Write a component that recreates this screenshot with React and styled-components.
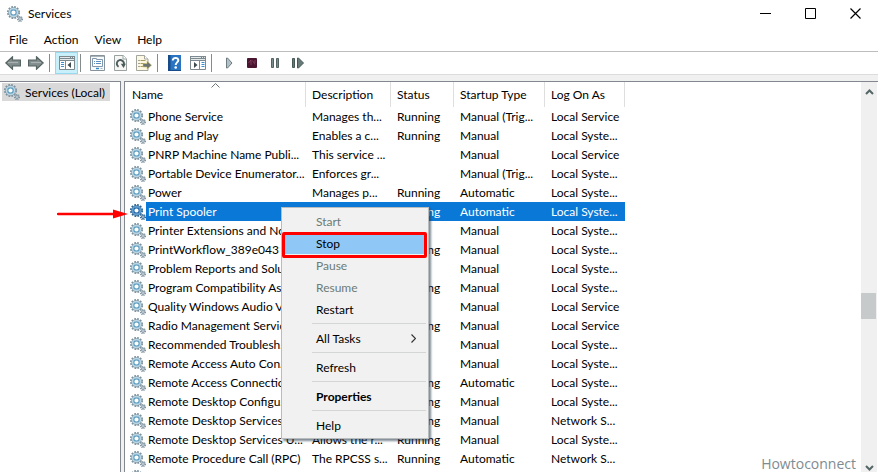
import React, { useState } from 'react';
import styled, { createGlobalStyle } from 'styled-components';

const services = [
    ['Phone Service', 'Manages th...', 'Running', 'Manual (Trig...', 'Local Service'],
    ['Plug and Play', 'Enables a c...', 'Running', 'Manual', 'Local Syste...'],
    ['PNRP Machine Name Publi...', 'This service ...', '', 'Manual', 'Local Service'],
    ['Portable Device Enumerator...', 'Enforces gr...', '', 'Manual (Trig...', 'Local Syste...'],
    ['Power', 'Manages p...', 'Running', 'Automatic', 'Local Syste...'],
    ['Print Spooler', '', 'Running', 'Automatic', 'Local Syste...'],
    ['Printer Extensions and Not...', '', '', 'Manual', 'Local Syste...'],
    ['PrintWorkflow_389e043', '', 'Running', 'Manual', 'Local Syste...'],
    ['Problem Reports and Solu...', '', '', 'Manual', 'Local Syste...'],
    ['Program Compatibility Ass...', '', 'Running', 'Manual', 'Local Syste...'],
    ['Quality Windows Audio Vi...', '', '', 'Manual', 'Local Service'],
    ['Radio Management Service', '', 'Running', 'Manual', 'Local Service'],
    ['Recommended Troublesh...', '', '', 'Manual', 'Local Syste...'],
    ['Remote Access Auto Con...', '', '', 'Manual', 'Local Syste...'],
    ['Remote Access Connectio...', '', 'Running', 'Automatic', 'Local Syste...'],
    ['Remote Desktop Configu...', '', 'Running', 'Manual', 'Local Syste...'],
    ['Remote Desktop Services', '', 'Running', 'Manual', 'Network S...'],
    ['Remote Desktop Services U...', 'Allows the r...', 'Running', 'Manual', 'Local Syste...'],
    ['Remote Procedure Call (RPC)', 'The RPCSS s...', 'Running', 'Automatic', 'Network S...'],
    ['', '', '', '', ''],
];

function GearIcon({ selected }) {
    const teeth = selected ? '#2f6490' : '#7d929f';
    const body = selected ? '#5f9fd0' : '#b9d6e4';
    return (
        <Svg width="16" height="16" viewBox="0 0 16 16">
            <circle cx="6.5" cy="6.5" r="5.7" fill="none" stroke={teeth} strokeWidth="1.7" strokeDasharray="1.8 1.18" />
            <circle cx="6.5" cy="6.5" r="4.4" fill="none" stroke={teeth} strokeWidth="1.6" />
            <circle cx="6.5" cy="6.5" r="4" fill="none" stroke={body} strokeWidth="1.6" />
            <circle cx="6.5" cy="6.5" r="2.7" fill="#fff" stroke={selected ? '#1f66aa' : '#5c9dc2'} strokeWidth="1.2" />
            <circle cx="13" cy="13" r="2.4" fill="none" stroke={teeth} strokeWidth="1.3" strokeDasharray="1.1 .78" />
            <circle cx="13" cy="13" r="1.4" fill="#e4eef3" stroke={teeth} strokeWidth="1" />
        </Svg>
    );
}

function ArrowIcon({ right }) {
    return (
        <Svg width="16" height="14" viewBox="0 0 16 14">
            <path
                d="M.8 7 7.500.8V4h8v6h-8v3.200z"
                fill="#818c8c"
                stroke="#566363"
                strokeWidth="1.200"
                transform={right ? 'matrix(-1 0 0 1 16 0)' : undefined}
            />
            <path d="M3 6.500h10" stroke="#a9b1b1" strokeWidth="1.200" />
        </Svg>
    );
}

function PaneIcon({ right }) {
    return (
        <Svg width="16" height="14" viewBox="0 0 16 14">
            <path d="M.5.5h15v13H.5z" fill="#fff" stroke="#7c898f" />
            <path d="M0 0h16v5H0z" fill="#7c898f" />
            <path d="M1 1.500h10M1 3.500h14M12 1.500h1M14 1.500h1" stroke="#e4eaec" />
            {right ? (
                <>
                    <path d="M9.500 5v8" stroke="#7c898f" />
                    <path d="M4 6v6l3.500-3z" fill="#3f4d50" />
                    <path d="M11.500 6.500h3M11.500 8.500h3M11.500 10.500h3" stroke="#3b91d0" />
                </>
            ) : (
                <>
                    <path d="M6.500 5v8" stroke="#7c898f" />
                    <path d="M12 6v6L8.500 9z" fill="#3f4d50" />
                    <path d="M2 6.500h3M2 8.500h3M2 10.500h3" stroke="#3b91d0" />
                </>
            )}
        </Svg>
    );
}

function PropertiesIcon() {
    return (
        <Svg width="15" height="16" viewBox="0 0 15 16">
            <path d="M.5.5h14v15H.5z" fill="#f7fafb" stroke="#87939a" />
            <path d="M1 1.500h13" stroke="#a9b3b8" />
            <path d="M2.500 3.500h4v1h6v7h-10z" fill="#fff" stroke="#8197ae" />
            <path d="M4 6.500h1M6 6.500h5M4 8.500h1M6 8.500h5" stroke="#5b8fc1" />
            <path d="M6 13.500h3" stroke="#2f86cc" strokeWidth="1.400" />
            <path d="M10.500 13.500h2" stroke="#9fb4c2" />
        </Svg>
    );
}

function RefreshIcon() {
    return (
        <Svg width="13" height="16" viewBox="0 0 13 16">
            <path d="M.5.5h8.700l3.300 3.300v11.700H.5z" fill="#f6f6f4" stroke="#99a1a1" />
            <path d="M9 .5V4h3.500" fill="#fff" stroke="#99a1a1" />
            <path d="M4.600 11.800a3.600 3.600 0 1 1 4.900-1.300" fill="none" stroke="#4d5c5c" strokeWidth="1.900" />
            <path d="M6.800 8.800h5L9.600 13z" fill="#4d5c5c" />
        </Svg>
    );
}

function ExportIcon() {
    return (
        <Svg width="16" height="16" viewBox="0 0 16 16">
            <path d="M.5.5h8L12 4v11.500H.5z" fill="#fdf8e4" stroke="#a3a69c" />
            <path d="M8.500.5V4H12" fill="#fff" stroke="#a3a69c" />
            <path d="M2.500 5.500h1M2.500 8.500h1M2.500 11.500h1" stroke="#44504f" />
            <path d="M4.500 5.500h5M4.500 8.500h4M4.500 11.500h5" stroke="#a99a62" />
            <path d="M7 8.500h4V6l4.600 4.200L11 14.300V12H7z" fill="#6b7672" stroke="#d8c766" strokeWidth=".5" />
        </Svg>
    );
}

function HelpIcon() {
    return (
        <Svg width="13" height="16" viewBox="0 0 13 16">
            <path d="M0 0h13v16H0z" fill="#2b74c2" />
            <path d="M0 0h2.500v16H0z" fill="#174a86" />
            <path d="M0 15.500h13" stroke="#174a86" />
            <path d="M4.800 5.500c0-3.600 5.700-3.300 5.500-.1-.1 1.900-2.600 2.200-2.600 4.600" fill="none" stroke="#fff" strokeWidth="2" />
            <circle cx="7.700" cy="12.500" r="1.300" fill="#fff" />
        </Svg>
    );
}

function MediaIcon({ kind }) {
    return (
        <Svg width="12" height="12" viewBox="0 0 12 12">
            {kind === 'start' && <path d="M3.500 1v10h1l4.500-5-4.500-5z" fill="#b3c0c5" stroke="#6d7c80" />}
            {kind === 'stop' && (
                <>
                    <rect x="1" y="1" width="10" height="10" rx="1" fill="#4a1530" />
                    <path d="M2.500 6 5 3v5M6.500 3.500 9 7.500M9 3v3" fill="none" stroke="#8a4463" strokeWidth=".8" />
                </>
            )}
            {kind === 'pause' && (
                <path d="M2.500 1.500h2v9h-2zM7.500 1.500h2v9h-2z" fill="#7b8c8c" stroke="#526262" />
            )}
            {kind === 'restart' && (
                <path d="M.5 1.500h2v9h-2zM5.500 1v10h1l5-5-5-5z" fill="#687b79" stroke="#455856" />
            )}
        </Svg>
    );
}

function ServiceTable() {
    const [selected, setSelected] = useState(5);

    return (
        <Table>
            <colgroup>
                <col width="181" />
                <col width="85" />
                <col width="63" />
                <col width="91" />
                <col width="80" />
            </colgroup>
            <thead>
                <tr>
                    <HeadCell $first>
                        Name
                        <SortMark width="9" height="5" viewBox="0 0 9 5">
                            <path d="M.5 4.500l4-4 4 4" fill="none" stroke="#6c7676" />
                        </SortMark>
                    </HeadCell>
                    <HeadCell>Description</HeadCell>
                    <HeadCell>Status</HeadCell>
                    <HeadCell>Startup Type</HeadCell>
                    <HeadCell>Log On As</HeadCell>
                </tr>
            </thead>
            <tbody>
                {services.map(([name, ...cells], index) => (
                    <Row key={index} $selected={index === selected} onClick={() => setSelected(index)}>
                        <NameCell>
                            <NameContent>
                                <GearIcon selected={index === selected} />
                                <NameText $selected={index === selected}>{name}</NameText>
                            </NameContent>
                        </NameCell>
                        {cells.map((cell, i) => (
                            <Cell key={i}>{cell}</Cell>
                        ))}
                    </Row>
                ))}
            </tbody>
        </Table>
    );
}

function ServiceMenu() {
    return (
        <Menu>
            <MenuItem disabled>Start</MenuItem>
            <MenuItem $marked>Stop</MenuItem>
            <MenuItem disabled>Pause</MenuItem>
            <MenuItem disabled>Resume</MenuItem>
            <MenuItem>Restart</MenuItem>
            <MenuLine />
            <MenuItem>
                All Tasks
                <Svg width="5" height="9" viewBox="0 0 5 9">
                    <path d="M.5.5l4 4-4 4" fill="none" stroke="#333" strokeWidth="1.200" />
                </Svg>
            </MenuItem>
            <MenuLine />
            <MenuItem>Refresh</MenuItem>
            <MenuLine />
            <MenuItem $bold>Properties</MenuItem>
            <MenuLine />
            <MenuItem>Help</MenuItem>
        </Menu>
    );
}

function App() {
    return (
        <Window>
            <GlobalStyle />
            <TitleBar>
                <GearIcon />
                <Title>Services</Title>
                <WindowButton aria-label="Minimize">
                    <Svg width="11" height="11" viewBox="0 0 11 11">
                        <path d="M0 5.500h11" stroke="#000" />
                    </Svg>
                </WindowButton>
                <WindowButton aria-label="Maximize">
                    <Svg width="11" height="11" viewBox="0 0 11 11">
                        <path d="M.5.5h10v10H.5z" fill="none" stroke="#000" />
                    </Svg>
                </WindowButton>
                <WindowButton aria-label="Close">
                    <Svg width="11" height="11" viewBox="0 0 11 11">
                        <path d="M.5.5l10 10M10.500.5l-10 10" stroke="#000" strokeWidth="1.200" />
                    </Svg>
                </WindowButton>
            </TitleBar>
            <MenuBar>
                <MenuBarButton>File</MenuBarButton>
                <MenuBarButton>Action</MenuBarButton>
                <MenuBarButton>View</MenuBarButton>
                <MenuBarButton>Help</MenuBarButton>
            </MenuBar>
            <Toolbar>
                <Tool aria-label="Back"><ArrowIcon /></Tool>
                <Tool aria-label="Forward"><ArrowIcon right /></Tool>
                <Divider />
                <Tool $active aria-label="Show console tree"><PaneIcon /></Tool>
                <Divider />
                <Tool aria-label="Properties"><PropertiesIcon /></Tool>
                <Tool aria-label="Refresh"><RefreshIcon /></Tool>
                <Tool aria-label="Export list"><ExportIcon /></Tool>
                <Divider />
                <Tool aria-label="Help"><HelpIcon /></Tool>
                <Tool aria-label="Show action pane"><PaneIcon right /></Tool>
                <Divider />
                <Tool aria-label="Start service"><MediaIcon kind="start" /></Tool>
                <Tool aria-label="Stop service"><MediaIcon kind="stop" /></Tool>
                <Tool aria-label="Pause service"><MediaIcon kind="pause" /></Tool>
                <Tool aria-label="Restart service"><MediaIcon kind="restart" /></Tool>
            </Toolbar>
            <Panes>
                <Tree>
                    <TreeItem>
                        <GearIcon />
                        Services (Local)
                    </TreeItem>
                </Tree>
                <List>
                    <TableArea>
                        <ServiceTable />
                    </TableArea>
                    <Scrollbar>
                        <Svg width="9" height="6" viewBox="0 0 9 6">
                            <path d="M1 5l3.500-3.500L8 5" fill="none" stroke="#566" strokeWidth="2" />
                        </Svg>
                        <Track>
                            <Thumb />
                        </Track>
                        <Svg width="9" height="6" viewBox="0 0 9 6">
                            <path d="M1 1l3.500 3.500L8 1" fill="none" stroke="#566" strokeWidth="2" />
                        </Svg>
                    </Scrollbar>
                </List>
            </Panes>
            <ServiceMenu />
            <Pointer width="72" height="10" viewBox="0 0 72 10">
                <path d="M1 5h58" stroke="#f00" strokeWidth="2.500" strokeLinecap="round" />
                <path d="M56 .5 71 5 56 9.500z" fill="#f00" />
            </Pointer>
            <Watermark>Howtoconnect</Watermark>
        </Window>
    );
}

export default App;

const GlobalStyle = createGlobalStyle`
    body {
        margin: 0;
        background: #fff;
        overflow: hidden;
    }

    *, *::before, *::after {
        box-sizing: border-box;
    }

    body, button {
        font-family: Lato, 'Open Sans', sans-serif;
        font-size: 12px;
        color: #000;
    }

    button {
        border: 0;
        padding: 0;
        background: none;
    }
`;

const Svg = styled.svg`
    display: block;
    flex: none;
`;

const Window = styled.div`
    position: relative;
    display: flex;
    flex-direction: column;
    height: 100vh;
    overflow: hidden;
    background: #fff;
`;

const TitleBar = styled.header`
    display: flex;
    align-items: center;
    height: 27px;
    padding-left: 7px;
    flex: none;
`;

const Title = styled.span`
    flex: 1;
    padding-left: 5px;
`;

const WindowButton = styled.button`
    display: flex;
    align-items: center;
    justify-content: center;
    width: 45px;
    height: 27px;
`;

const MenuBar = styled.nav`
    display: flex;
    height: 25px;
    flex: none;
    padding-left: 1px;
    border-bottom: 1px solid #bdbdbd;
`;

const MenuBarButton = styled.button`
    padding: 0 8px;
`;

const Toolbar = styled.div`
    display: flex;
    align-items: center;
    height: 23px;
    flex: none;
    padding-left: 1px;
    border-bottom: 1px solid #dcdcdc;
`;

const Tool = styled.button`
    display: flex;
    align-items: center;
    justify-content: center;
    width: 23px;
    height: 22px;
    border: ${(props) => (props.$active ? '1px solid #99d9f0' : '0')};
    background: ${(props) => (props.$active ? '#c8f0fb' : 'none')};
`;

const Divider = styled.span`
    width: 1px;
    height: 18px;
    margin: 0 5px 0 2px;
    background: #858c8c;
`;

const Panes = styled.main`
    display: flex;
    gap: 3px;
    flex: 1;
    min-height: 0;
    padding-top: 6px;
    background: #f0f0f0;
`;

const Tree = styled.aside`
    width: 121px;
    flex: none;
    padding: 1px 2px;
    background: #fff;
    border-top: 1px solid #828790;
    border-right: 1px solid #828790;
`;

const TreeItem = styled.button`
    display: flex;
    align-items: center;
    gap: 5px;
    height: 18px;
    padding: 0 5px 0 2px;
    background: #d9d9d9;
    white-space: nowrap;
`;

const List = styled.section`
    display: flex;
    flex: 1;
    min-width: 0;
    padding-right: 1px;
    background: #fff;
    border-top: 1px solid #828790;
    border-left: 1px solid #828790;
`;

const TableArea = styled.div`
    flex: 1;
    min-width: 0;
    overflow: hidden;
`;

const Table = styled.table`
    width: 500px;
    table-layout: fixed;
    border-collapse: separate;
    border-spacing: 0;
`;

const HeadCell = styled.th`
    position: relative;
    height: 25px;
    padding: 0 0 0 ${(props) => (props.$first ? 7 : 6)}px;
    border-right: 1px solid #dedede;
    font-weight: 400;
    text-align: left;
    white-space: nowrap;
`;

const SortMark = styled.svg`
    position: absolute;
    top: 1px;
    left: 48%;
`;

const Row = styled.tr`
    color: ${(props) => (props.$selected ? '#fff' : '#000')};

    td:not(:first-child) {
        background: ${(props) => (props.$selected ? '#0a78d7' : 'none')};
    }
`;

const Cell = styled.td`
    height: 19px;
    padding: 0 0 0 6px;
    line-height: 19px;
    white-space: nowrap;
    overflow: hidden;
`;

const NameCell = styled(Cell)`
    padding-left: 5px;
`;

const NameContent = styled.div`
    display: flex;
    align-items: center;
    height: 19px;
`;

const NameText = styled.span`
    flex: 1;
    height: 19px;
    padding-left: 2px;
    background: ${(props) => (props.$selected ? '#0a78d7' : 'none')};
`;

const Scrollbar = styled.div`
    display: flex;
    flex-direction: column;
    align-items: center;
    width: 16px;
    flex: none;
    padding: 7px 0 1px;
    background: #f0f0f0;
`;

const Track = styled.div`
    display: flex;
    flex-direction: column;
    flex: 1;
    width: 100%;

    &::before {
        content: '';
        flex: 198 0 0;
    }

    &::after {
        content: '';
        flex: 146 0 0;
    }
`;

const Thumb = styled.div`
    height: 26px;
    width: 15px;
    background: #c6caca;
`;

const Menu = styled.div`
    position: absolute;
    top: 207px;
    left: 281px;
    display: flex;
    flex-direction: column;
    width: 148px;
    padding: 2px;
    background: #f1f1f1;
    border: 1px solid #b8bcbc;
    box-shadow: 2px 2px 2px rgba(40, 60, 80, 0.6);
`;

const MenuItem = styled.button`
    position: relative;
    display: flex;
    align-items: center;
    justify-content: space-between;
    height: 22px;
    padding: 0 10px 0 32px;
    font-weight: ${(props) => (props.$bold ? 700 : 400)};
    background: ${(props) => (props.$marked ? '#8fc8f6' : 'none')};

    &:disabled {
        color: #6d7b74;
    }

    &::after {
        content: '';
        display: ${(props) => (props.$marked ? 'block' : 'none')};
        position: absolute;
        inset: 0 -1px -4px -2px;
        border: 3px solid #f00;
        border-radius: 2px;
        z-index: 1;
    }
`;

const MenuLine = styled.hr`
    width: auto;
    height: 1px;
    margin: 3px 0 3px 28px;
    border: 0;
    background: #d4d6d6;
`;

const Pointer = styled.svg`
    position: absolute;
    top: 209px;
    left: 57px;
`;

const Watermark = styled.span`
    position: absolute;
    right: 22px;
    bottom: 0;
    font-family: 'Open Sans', sans-serif;
    font-size: 14px;
    line-height: 16px;
    color: #7f8b92;
`;
